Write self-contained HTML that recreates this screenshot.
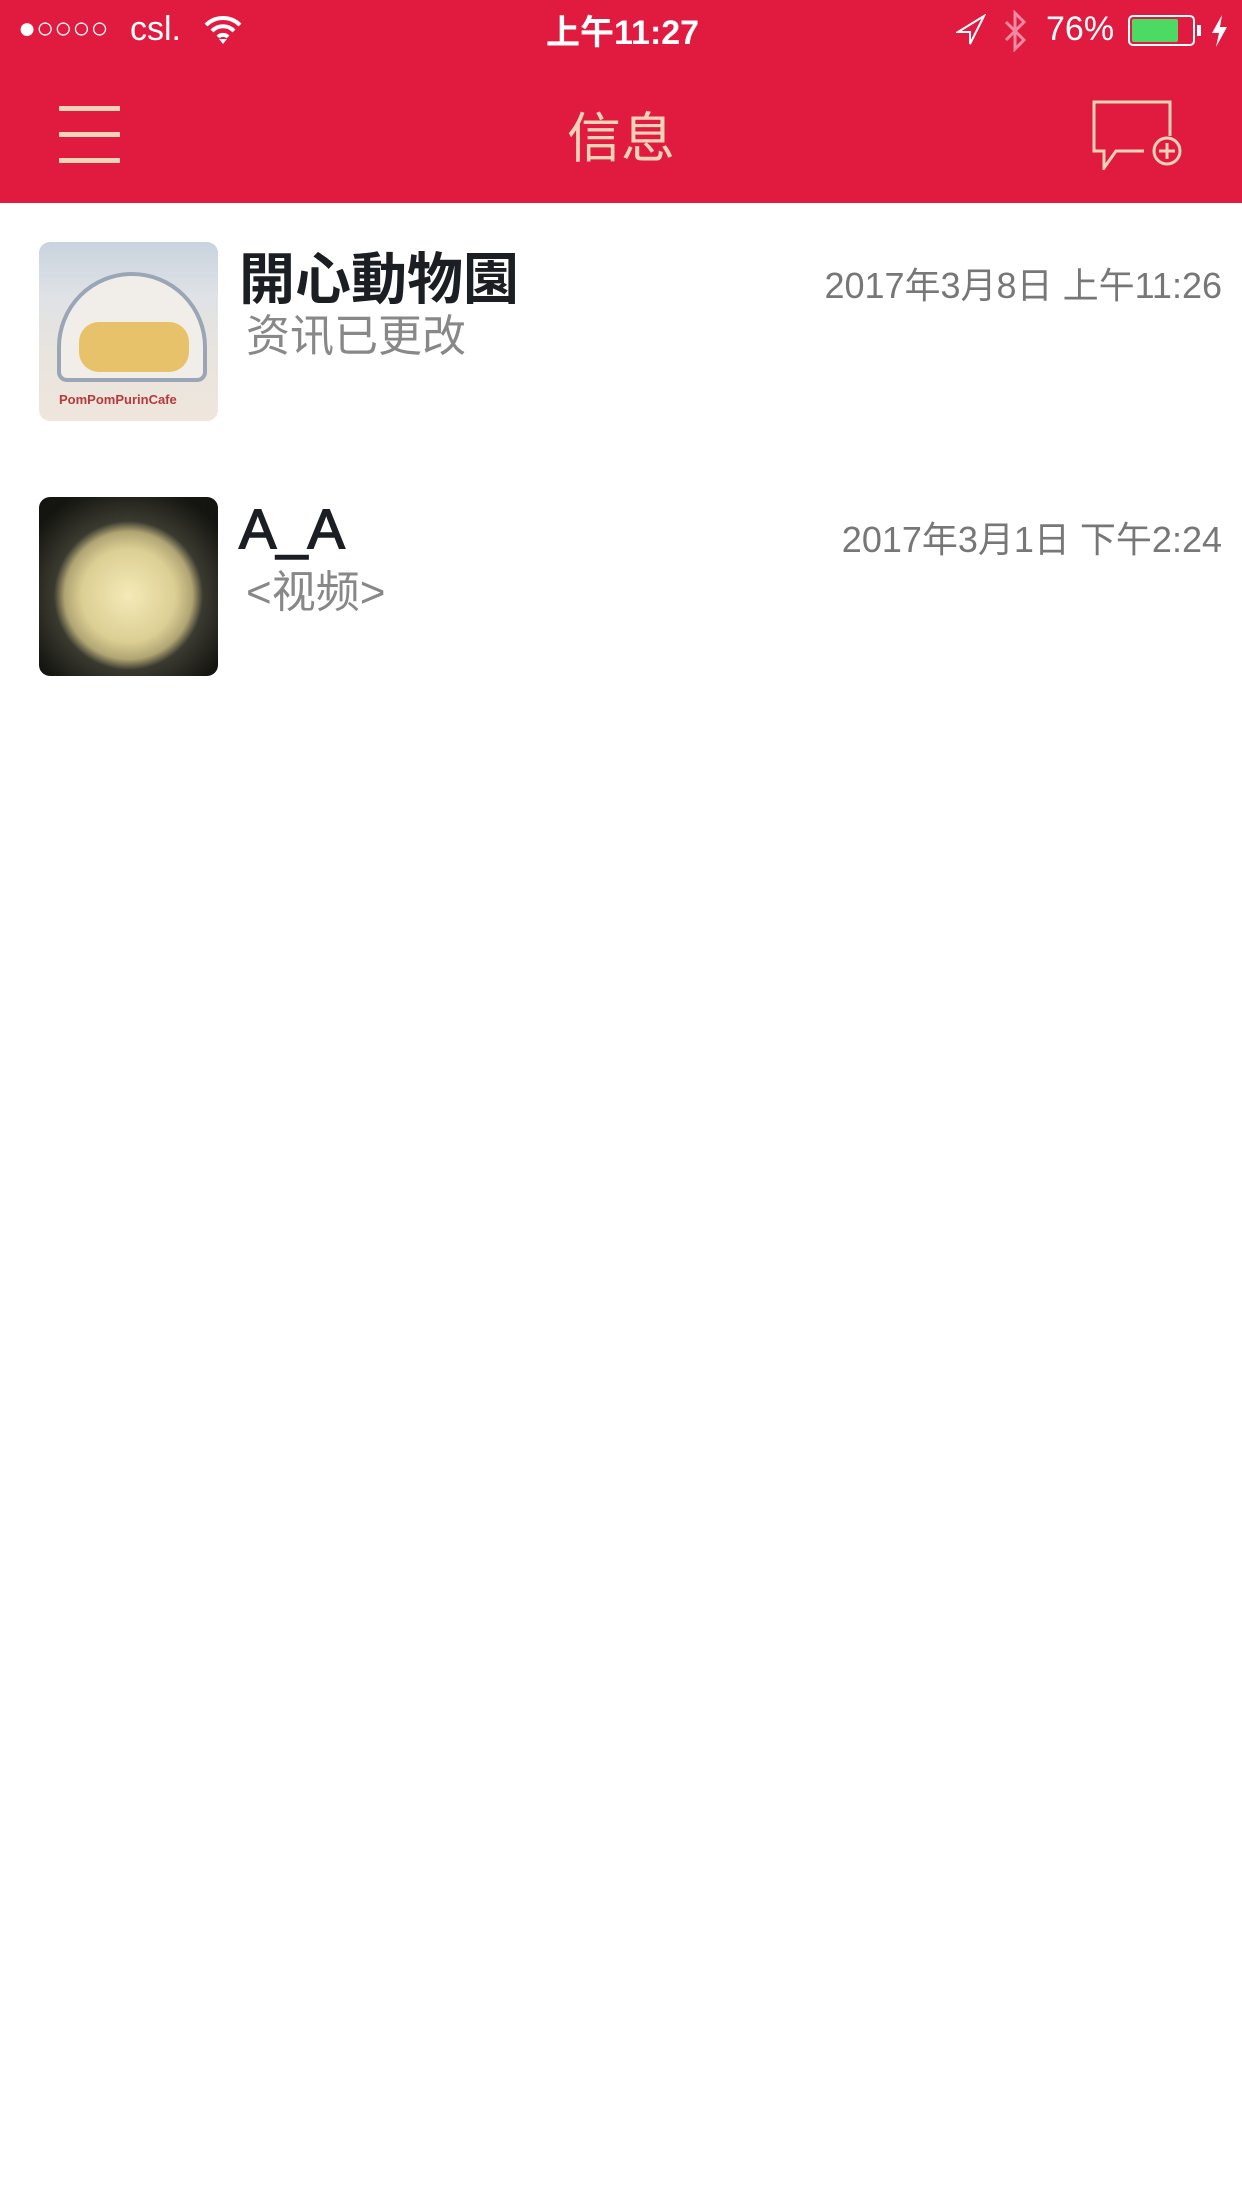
<!DOCTYPE html>
<html><head><meta charset="utf-8"><style>
*{margin:0;padding:0;box-sizing:border-box}
body{width:1242px;height:2208px;background:#fff;font-family:"Liberation Sans","Noto Sans CJK SC",sans-serif;position:relative;overflow:hidden}
.hdr{position:absolute;left:0;top:0;width:1242px;height:203px;background:#e11a40}
.abs{position:absolute;white-space:nowrap}
.st{color:#fff;font-size:34px;top:10px}
.bar{position:absolute;left:59px;width:61px;height:5px;background:#f2d3b8}
.av{position:absolute;left:39px;width:179px;height:179px;border-radius:11px;overflow:hidden}
.name{left:239px;font-size:56px;font-weight:bold;color:#1b1f24}
.sub{left:246px;font-size:44px;color:#888}
.date{right:20px;font-size:36px;color:#777}
</style></head><body>
<div class="hdr"></div>
<div class="abs st" style="left:18px;font-size:30px;top:12px">●○○○○</div>
<div class="abs st" style="left:130px">csl.</div>
<svg class="abs" style="left:203px;top:14px" width="40" height="32" viewBox="0 0 40 32"><path d="M3 11 A24 24 0 0 1 37 11 M9 17 A15 15 0 0 1 31 17 M15 23 A7 7 0 0 1 25 23" stroke="#fff" stroke-width="4" fill="none"/><path d="M16 25 L20 30 L24 25 Z" fill="#fff"/></svg>
<div class="abs st" style="left:546px;font-weight:bold;top:5px">上午11:27</div>
<svg class="abs" style="left:956px;top:14px" width="30" height="32" viewBox="0 0 30 32"><path d="M28 2 L2 18 L14 18 L14 30 Z" stroke="#fff" stroke-width="2" fill="none"/></svg>
<svg class="abs" style="left:1002px;top:10px" width="28" height="42" viewBox="0 0 28 42"><path d="M4 12 L22 30 L13 39 L13 3 L22 12 L4 30" stroke="#f08aa0" stroke-width="3" fill="none"/></svg>
<div class="abs st" style="left:1046px">76%</div>
<div class="abs" style="left:1128px;top:15px;width:67px;height:31px;border:2px solid #fff;border-radius:5px;padding:2px"><div style="width:46px;height:23px;background:#4cd964;border-radius:2px"></div></div>
<div class="abs" style="left:1197px;top:25px;width:4px;height:11px;background:#fff"></div>
<svg class="abs" style="left:1208px;top:14px" width="22" height="34" viewBox="0 0 22 34"><path d="M14 1 L4 19 L11 19 L8 33 L19 13 L12 13 Z" fill="#fff"/></svg>
<div class="bar" style="top:106px"></div><div class="bar" style="top:132px"></div><div class="bar" style="top:158px"></div>
<div class="abs" style="left:0;width:1242px;text-align:center;top:94px;font-size:54px;color:#f2d3b8">信息</div>
<svg class="abs" style="left:1090px;top:98px" width="96" height="72" viewBox="0 0 96 72"><path d="M54 53 L26 53 L14 70 L14 53 L4 53 L4 4 L80 4 L80 38" stroke="#f2d3b8" stroke-width="3" fill="none"/><circle cx="77" cy="53" r="13" stroke="#f2d3b8" stroke-width="3" fill="none"/><path d="M77 45 V61 M69 53 H85" stroke="#f2d3b8" stroke-width="3"/></svg>

<div class="av" style="top:242px;background:linear-gradient(#c9d3de 0%,#dfe2e6 30%,#e8e4de 60%,#efe6dc 100%)">
<div style="position:absolute;left:18px;top:30px;width:150px;height:110px;border-radius:75px 75px 10px 10px;border:4px solid #9aa6b5;background:#f1eee9"></div>
<div style="position:absolute;left:40px;top:80px;width:110px;height:50px;background:#e8c26a;border-radius:20px"></div>
<div style="position:absolute;left:20px;top:150px;font-size:13px;font-weight:bold;color:#b8393b">PomPomPurinCafe</div>
</div>
<div class="av" style="top:497px;background:radial-gradient(circle at 50% 55%,#f5eab8 0,#dccf94 35%,#b0a473 48%,#3a3a30 56%,#141410 85%)"></div>

<div class="abs name" style="top:235px">開心動物園</div>
<div class="abs sub" style="top:300px">资讯已更改</div>
<div class="abs date" style="top:257px">2017年3月8日 上午11:26</div>

<div class="abs name" style="top:496px;font-weight:normal;-webkit-text-stroke:1.5px #1b1f24">A_A</div>
<div class="abs sub" style="top:556px">&lt;视频&gt;</div>
<div class="abs date" style="top:511px">2017年3月1日 下午2:24</div>
</body></html>
